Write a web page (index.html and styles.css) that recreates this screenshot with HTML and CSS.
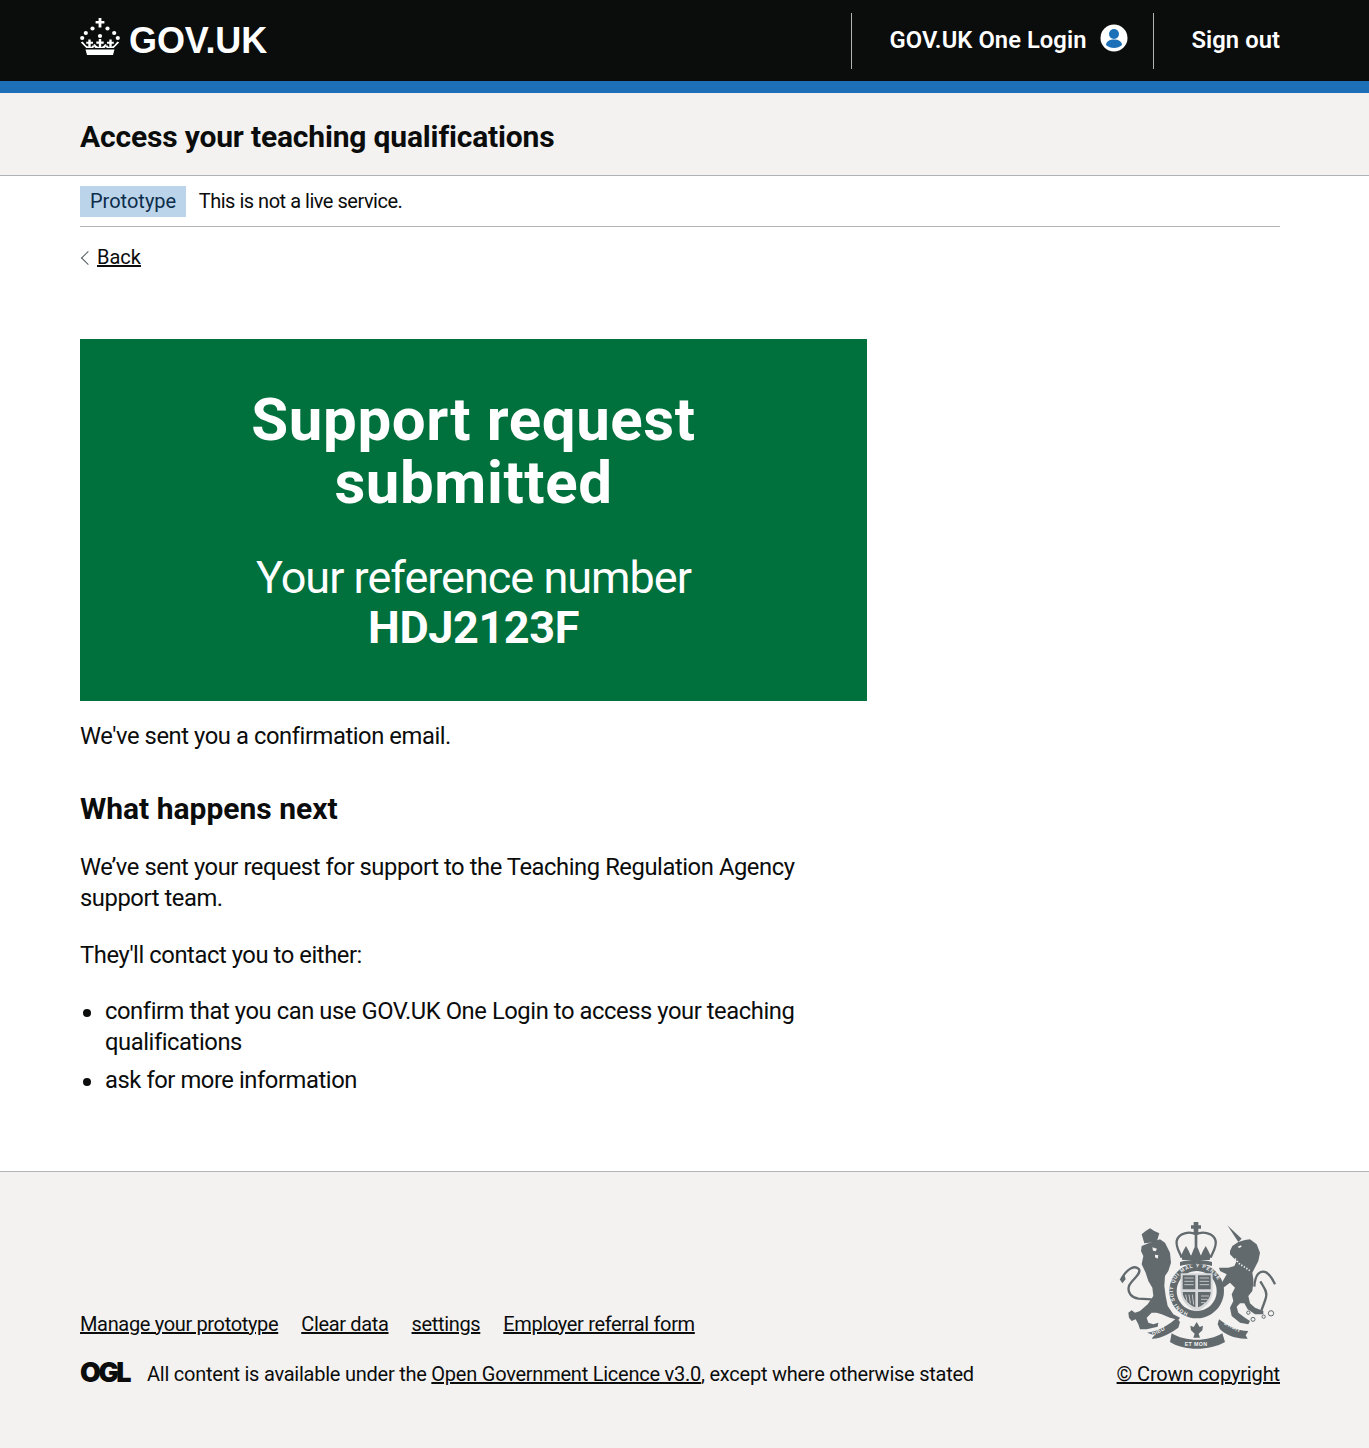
FILE: index.html
```html
<!DOCTYPE html>
<html lang="en">
<head>
    <meta charset="UTF-8">
    <meta name="viewport" content="width=device-width, initial-scale=1.0">
    <title>Support request submitted</title>
    <link rel="stylesheet" href="styles.css">
</head>
<body>
    <!-- Cabecera negra -->
    <header class="top-header">
        <div class="container top-header-inner">
            <a class="logo" href="#">
                <svg class="logo-crown" viewBox="0 0 40 37" aria-hidden="true">
                    <path d="M18.600 0h2.800v3h3v2.600h-3v4h-2.800v-4h-3V3h3z"/>
                    <circle cx="12.500" cy="10.500" r="2.100"/>
                    <circle cx="27.500" cy="10.500" r="2.100"/>
                    <circle cx="5.800" cy="15" r="2.100"/>
                    <circle cx="34.200" cy="15" r="2.100"/>
                    <circle cx="2.200" cy="20" r="2.100"/>
                    <circle cx="37.800" cy="20" r="2.100"/>
                    <circle cx="20" cy="18" r="2.100"/>
                    <path d="M18.800 21h2.400v2.500h2.500v2.200h-2.500V29c2-.5 3.300-1.800 3.800-3l1.700.8c-.3 1.200-1.200 2.200-2 3.200h-9.400c-.8-1-1.700-2-2-3.200l1.700-.8c.5 1.200 1.800 2.500 3.800 3v-3.300h-2.500v-2.200h2.500z"/>
                    <path d="M8.300 21.500h2.400v2.200h2.300v2.100h-2.300V29c1-.3 1.700-1 2-1.800l1.600.7c-.2.800-.6 1.500-1.200 2.100H6.300L.8 24.500l1.700-.9L6 27.500l2.300 1.300v-3H6.200v-2.100h2.100z"/>
                    <path d="M29.300 21.500h2.400v2.200h2.100v2.100h-2.100v3l2.300-1.300 3.500-3.900 1.700.9-5.500 5.500h-6.800c-.6-.6-1-1.300-1.200-2.100l1.600-.7c.3.800 1 1.500 2 1.800v-3.200H27v-2.100h2.300z"/>
                    <path d="M5.500 31.500h29L33 37H7z"/>
                </svg>
                <span class="logo-text">GOV.UK</span>
            </a>
            <nav class="account-nav">
                <a href="#" class="account-link">
                    GOV.UK One Login
                    <svg class="account-icon" viewBox="0 0 28 28" aria-hidden="true">
                        <circle cx="14" cy="14" r="13.500" fill="#fff"/>
                        <circle cx="14" cy="10" r="5" fill="#1d70b8"/>
                        <path d="M6 21c0-3.500 3.500-5.500 8-5.500s8 2 8 5.500c-2 2-5 3-8 3s-6-1-8-3z" fill="#1d70b8"/>
                    </svg>
                </a>
                <a href="#" class="account-link signout-link">Sign out</a>
            </nav>
        </div>
    </header>
    <div class="blue-bar"></div>

    <div class="service-bar">
        <div class="container">
            <a class="service-name" href="#">Access your teaching qualifications</a>
        </div>
    </div>

    <div class="container">
        <div class="phase-banner">
            <strong class="phase-tag">Prototype</strong>
            <span>This is not a live service.</span>
        </div>
        <a href="#" class="back-link">Back</a>

        <main class="main-col">
            <div class="panel">
                <h1 class="panel-title">Support request submitted</h1>
                <div class="panel-body">Your reference number<br><strong>HDJ2123F</strong></div>
            </div>
            <p class="body-text">We've sent you a confirmation email.</p>
            <h2 class="sub-heading">What happens next</h2>
            <p class="body-text">We’ve sent your request for support to the Teaching Regulation Agency support team.</p>
            <p class="body-text">They'll contact you to either:</p>
            <ul class="bullet-list">
                <li>confirm that you can use GOV.UK One Login to access your teaching qualifications</li>
                <li>ask for more information</li>
            </ul>
        </main>
    </div>

    <footer class="footer">
        <div class="container footer-inner">
            <div class="footer-left">
                <ul class="footer-links">
                    <li><a href="#">Manage your prototype</a></li>
                    <li><a href="#">Clear data</a></li>
                    <li><a href="#">settings</a></li>
                    <li><a href="#">Employer referral form</a></li>
                </ul>
                <div class="licence">
                    <span class="ogl">OGL</span>
                    <span>All content is available under the <a href="#">Open Government Licence v3.0</a>, except where otherwise stated</span>
                </div>
            </div>
            <div class="footer-right">
                <svg class="arms" viewBox="0 0 495 420" aria-hidden="true">
                    <defs>
                        <path id="garter-arc" d="M245 296a71 71 0 1 1 .1 0"/>
                    </defs>
                    <!-- leon -->
                    <path d="M88 82l-8-27 12-10 13-8 13 8 15 7-8 26z"/>
                    <path d="M80 90l20-8 35-12 15 10 15 30 3 30-8 25-10 15-2 30 4 30 6 30 17 25 20 10-5 7-25-7-25-10-15-5h-15l-15 15 5 15 15 5 15-5-2 12-33 8H75l-5-15-8-15-12 5-8-10-2-15 10-7 10 7 15-5 23-20 17-25-3-25-12-20-8-25-12-25 5-25-7-15z"/>
                    <path class="arms-cut" d="M112 94l14 4-4 8-8-2zM120 116l10 2-2 10-8-4z"/>
                    <path class="arms-line" d="M20 187C35 160 60 145 72 160c8 15-22 30-30 50-6 20 8 35 28 38l40 2"/>
                    <path d="M14 190l14-14 4 14-10 12z"/>
                    <!-- corona central -->
                    <path d="M236 18h14v10h8v10h-8v14h-14V38h-8V28h8z"/>
                    <path class="arms-line" d="M243 55c-18-10-53-5-58 20-3 20 10 35 15 50M243 55c19-10 54-5 59 20 3 20-10 35-15 50"/>
                    <path d="M239 55h8v60h-8zM198 118h90l-4 14h-82zM213 90l8 14 6 14h-28l6-14zM243 84l8 18 6 16h-28l6-16zM272 90l8 14 6 14h-28l6-14z"/>
                    <path d="M195 138c30-8 66-8 96 0v12c-30-8-66-8-96 0z"/>
                    <!-- jarretera y escudo -->
                    <path fill-rule="evenodd" d="M245 143a82 82 0 1 1-.1 0zm0 22a60 60 0 1 0 .1 0z"/>
                    <text class="arms-garter"><textPath href="#garter-arc" startOffset="6%">HONI SOIT QUI MAL Y PENSE</textPath></text>
                    <path class="arms-shield" d="M197 172h96v52c0 32-24 52-48 62-24-10-48-30-48-62z"/>
                    <path d="M203 178h38v42h-38zM249 178h38v42h-38zM203 228h38v46c-20-8-38-26-38-46zM249 228h38c0 20-18 38-38 46z"/>
                    <path class="arms-hatch" d="M208 186h28M208 196h28M208 206h28M254 186h28M254 196h28M254 206h28M212 236l4 20M222 236l4 26M232 236l4 30M258 240h24M258 250h20M258 260h12"/>
                    <!-- unicornio -->
                    <path d="M337 28l43 40-10 10z"/>
                    <path d="M345 105l7-15 18-12 20-6 15-2 20 15 10 25-5 25-18 35 3 20v10l-3 25-12 15 5 22 15 13 25 10v10h-25l-22-15-10-18h-13l-10 10 5 18 20 15 15 10-5 10-25-5-25-20-5-25 10-20-5-20 10-20-15-15-20 15-7-10 17-30-20-10-3-10h28l18-5 7-15-10-10-10-10z"/>
                    <path class="arms-cut" d="M368 92l10-4 2 4-8 4z"/>
                    <path class="arms-chain" d="M360 128l14 16 16 10 14 10"/>
                    <path class="arms-line" d="M418 212c2-37 17-52 37-42 13 8 20 25 25 35"/>
                    <path class="arms-line" d="M436 196c10 18 22 30 17 48-3 14-10 26-15 44"/>
                    <circle class="arms-ring" cx="400" cy="290" r="5"/>
                    <circle class="arms-ring" cx="414" cy="310" r="6"/>
                    <circle class="arms-ring" cx="446" cy="302" r="5"/>
                    <circle class="arms-ring" cx="468" cy="292" r="8"/>
                    <!-- lema -->
                    <path d="M96 350c34-5 69-25 89-45l10 13-5 17c-20 15-55 35-80 33l8-10z"/>
                    <path d="M312 310c28 20 53 35 88 35l-8 13 6 10c-38 2-68-13-83-28l-7-15z"/>
                    <path d="M170 352c40 26 110 26 152 0l8 26c-45 27-125 27-165 0z"/>
                    <path d="M245 318l9 15 10-4-2 14-11 10 4 12h-20l4-12-11-10-2-14 10 4z"/>
                    <text class="arms-motto" x="114" y="360" transform="rotate(-27 114 360)">DIEU</text>
                    <text class="arms-motto" x="209" y="390">ET MON</text>
                    <text class="arms-motto" x="326" y="325" transform="rotate(27 326 325)">DROIT</text>
                </svg>
                <a href="#" class="copyright">© Crown copyright</a>
            </div>
        </div>
    </footer>
</body>
</html>
```
FILE: styles.css
```css
* {
    box-sizing: border-box;
}

body {
    margin: 0;
    font-family: Roboto, "Liberation Sans", sans-serif;
    font-size: 23.75px;
    line-height: 31.25px;
    letter-spacing: -0.018em;
    color: #0b0c0c;
    background-color: #fff;
}

a {
    color: inherit;
}

.container {
    width: 1200px;
    margin: 0 auto 0 80px;
}

/* Cabecera */
.top-header {
    height: 81px;
    background-color: #0b0c0c;
    color: #fff;
}

.top-header-inner {
    display: flex;
    justify-content: space-between;
    align-items: center;
    height: 81px;
}

.logo {
    display: flex;
    align-items: flex-start;
    gap: 9px;
    height: 38px;
    margin-top: -7px;
    text-decoration: none;
}

.logo-crown {
    width: 40px;
    height: 37px;
    fill: #fff;
}

.logo-text {
    margin-top: 3px;
    font-family: "Liberation Sans", sans-serif;
    font-weight: 700;
    font-size: 36px;
    line-height: 40px;
    letter-spacing: -0.1px;
}

.account-nav {
    display: flex;
    height: 56px;
    font-weight: 600;
    letter-spacing: 0.06px;
}

.account-link {
    display: flex;
    align-items: center;
    gap: 13px;
    padding: 1px 25px 0 38px;
    border-left: 1px solid #b1b4b6;
    text-decoration: none;
}

.signout-link {
    padding-right: 0;
}

.account-icon {
    width: 28px;
    height: 28px;
    margin-top: -6px;
}

.blue-bar {
    height: 12px;
    background-color: #1d70b8;
}

.service-bar {
    height: 83px;
    padding-top: 26px;
    background-color: #f3f2f1;
    border-bottom: 1px solid #b1b4b6;
}

.service-name {
    font-size: 30px;
    font-weight: 700;
    line-height: 35px;
    letter-spacing: -0.17px;
    text-decoration: none;
}

/* Banner de fase */
.phase-banner {
    display: flex;
    align-items: center;
    gap: 13px;
    height: 51px;
    padding-top: 1px;
    border-bottom: 1px solid #b1b4b6;
    font-size: 20px;
    line-height: 25px;
    letter-spacing: -0.024em;
}

.phase-tag {
    padding: 3px 9.500px 3px 10px;
    font-weight: 400;
    letter-spacing: 0;
    color: #0c2d4a;
    background-color: #bbd4ea;
}

.back-link {
    display: inline-block;
    position: relative;
    margin-top: 18px;
    padding-left: 17px;
    font-size: 20px;
    line-height: 25px;
    letter-spacing: 0;
}

.back-link::before {
    content: "";
    position: absolute;
    left: 3px;
    top: 8px;
    width: 9px;
    height: 9px;
    border-left: 1px solid #505a5f;
    border-bottom: 1px solid #505a5f;
    transform: rotate(45deg);
}

/* Panel de confirmacion */
.main-col {
    width: 787px;
    margin-top: 67px;
    padding-bottom: 67px;
}

.panel {
    height: 362px;
    padding: 50px 40px 0;
    text-align: center;
    color: #fff;
    background-color: #00703c;
}

.panel-title {
    margin: 0 0 39px;
    font-size: 60px;
    line-height: 62.500px;
    font-weight: 700;
    letter-spacing: 0.6px;
}

.panel-body {
    font-size: 45px;
    line-height: 50px;
    letter-spacing: -1px;
}

.panel-body strong {
    letter-spacing: -0.400px;
}

.body-text {
    margin: 20px 0 25px;
}

.sub-heading {
    margin: 37px 0 25px;
    font-size: 30px;
    line-height: 37.500px;
    font-weight: 700;
    letter-spacing: 0;
}

.bullet-list {
    margin: 0;
    padding-left: 25px;
    list-style-type: none;
}

.bullet-list li {
    position: relative;
    margin-bottom: 7px;
}

.bullet-list li::before {
    content: "";
    position: absolute;
    left: -22px;
    top: 13px;
    width: 8px;
    height: 8px;
    border-radius: 50%;
    background-color: #0b0c0c;
}

/* Pie de pagina */
.footer {
    height: 278px;
    padding-top: 44px;
    background-color: #f3f2f1;
    border-top: 1px solid #b1b4b6;
    font-size: 20px;
    line-height: 25px;
    letter-spacing: -0.012em;
}

.footer-inner {
    display: flex;
    justify-content: space-between;
    align-items: flex-end;
}

.footer-links {
    display: flex;
    gap: 23px;
    margin: 0 0 25px;
    padding: 0;
    list-style-type: none;
    letter-spacing: -0.017em;
}

.licence {
    display: flex;
    align-items: center;
    gap: 15px;
}

.ogl {
    width: 52px;
    margin-top: -3px;
    font-family: "Inter", sans-serif;
    font-size: 27px;
    font-weight: 900;
    letter-spacing: -2.500px;
}

.footer-right {
    display: flex;
    flex-direction: column;
    align-items: flex-end;
}

.copyright {
    letter-spacing: -0.130px;
}

.arms {
    display: block;
    width: 165px;
    height: 140px;
    margin-bottom: 6px;
    fill: #626a6e;
}

.arms-cut {
    fill: #f3f2f1;
}

.arms-line {
    fill: none;
    stroke: #626a6e;
    stroke-width: 7;
}

.arms-chain {
    fill: none;
    stroke: #f3f2f1;
    stroke-width: 5;
    stroke-dasharray: 4 5;
}

.arms-ring {
    fill: none;
    stroke: #626a6e;
    stroke-width: 3;
}

.arms-shield {
    fill: #d5d7d8;
}

.arms-hatch {
    fill: none;
    stroke: #f3f2f1;
    stroke-width: 2;
}

.arms-garter {
    font-family: "Liberation Sans", sans-serif;
    font-size: 15px;
    font-weight: 700;
    letter-spacing: 2.500px;
    fill: #f3f2f1;
}

.arms-motto {
    font-family: "Liberation Sans", sans-serif;
    font-size: 16px;
    font-weight: 700;
    letter-spacing: 1px;
    fill: #f3f2f1;
}
```
